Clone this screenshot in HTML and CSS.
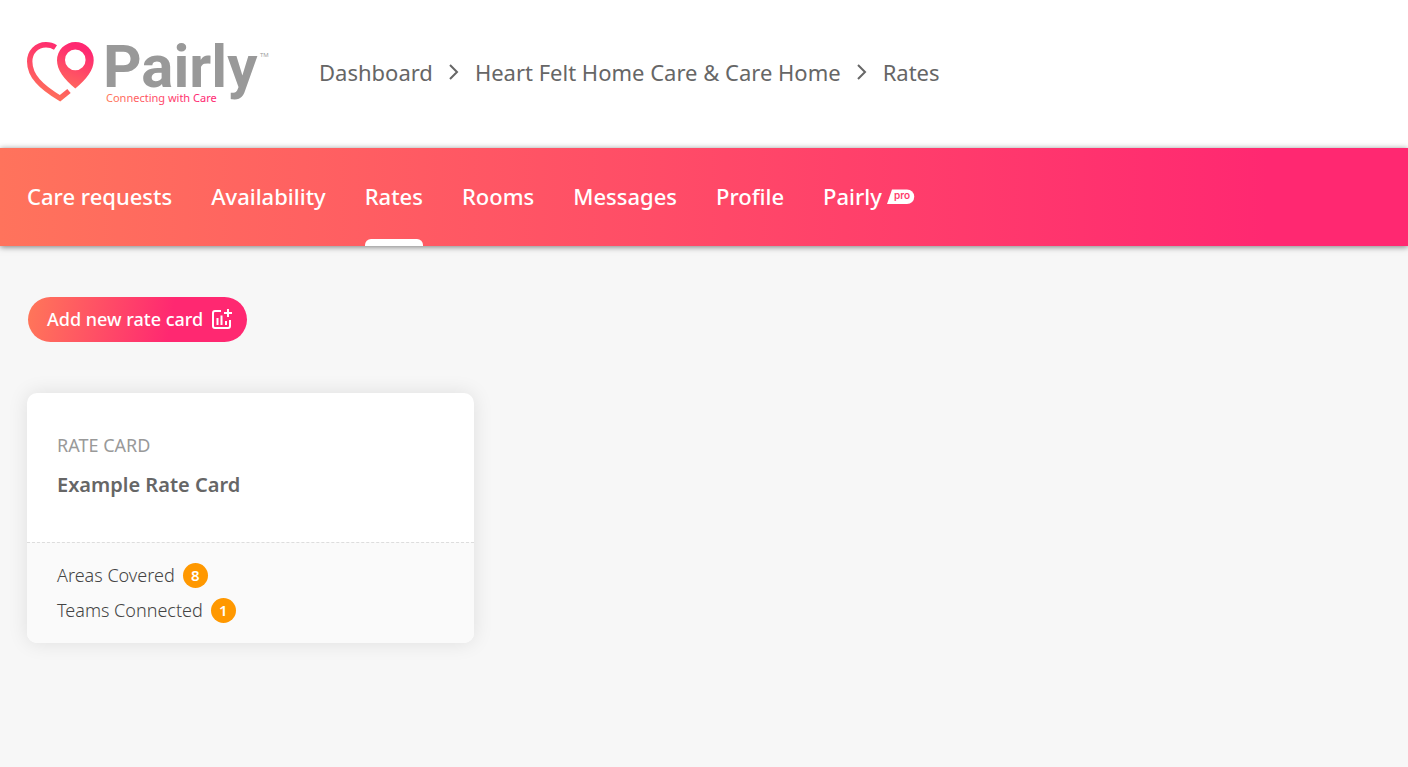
FILE: index.html
```html
<!DOCTYPE html>
<html lang="en">
  <head>
    <meta charset="utf-8" />
    <meta name="viewport" content="width=device-width, initial-scale=1" />
    <title>Rates - Pairly</title>
    <link rel="stylesheet" href="styles.css">
  </head>
  <body>
    <header class="header">
      <a class="logo" href="#" aria-label="Pairly home">
        <svg width="244" height="66" viewBox="0 0 244 66">
          <defs>
            <linearGradient id="heart" gradientUnits="userSpaceOnUse" x1="12" y1="50" x2="30" y2="0">
              <stop offset="0" stop-color="#ff6b5c" />
              <stop offset="1" stop-color="#ff2871" />
            </linearGradient>
            <linearGradient id="pin" gradientUnits="userSpaceOnUse" x1="38" y1="48" x2="54" y2="8">
              <stop offset="0" stop-color="#ff6b5c" />
              <stop offset="1" stop-color="#ff2871" />
            </linearGradient>
            <linearGradient id="tagline" gradientUnits="userSpaceOnUse" x1="79" y1="0" x2="194" y2="0">
              <stop offset="0" stop-color="#ff7759" />
              <stop offset="0.8" stop-color="#ff2871" />
            </linearGradient>
          </defs>
          <path d="M28.500 6.500C25.500 4.500 22.500 3.700 19 3.700C9.500 3.700 2.700 11 2.700 20.500C2.700 35 14 46 33 57.300L42 50" fill="none" stroke="url(#heart)" stroke-width="5.400" />
          <path fill="url(#pin)" fill-rule="evenodd" d="M48.300 1A18.300 18.300 0 0 0 30 19.300C30 29 37 38 48.300 47.500C59.600 38 66.700 29 66.700 19.300A18.300 18.300 0 0 0 48.300 1ZM48.300 8.600A10.300 10.300 0 1 1 48.300 29.200A10.300 10.300 0 1 1 48.300 8.600Z" />
          <text class="logo-name" x="76" y="46">Pairly</text>
          <text class="logo-tm" x="233" y="16">TM</text>
          <text class="logo-tagline" x="79" y="61" fill="url(#tagline)">Connecting with Care</text>
        </svg>
      </a>
      <nav class="breadcrumb" aria-label="Breadcrumb">
        <a href="#">Dashboard</a>
        <svg width="10" height="16" viewBox="0 0 10 16"><path d="M1 1l7 7-7 7" /></svg>
        <a href="#">Heart Felt Home Care &amp; Care Home</a>
        <svg width="10" height="16" viewBox="0 0 10 16"><path d="M1 1l7 7-7 7" /></svg>
        <a href="#">Rates</a>
      </nav>
    </header>

    <nav class="menu">
      <a href="#">Care requests</a>
      <a href="#">Availability</a>
      <a class="active" href="#">Rates</a>
      <a href="#">Rooms</a>
      <a href="#">Messages</a>
      <a href="#">Profile</a>
      <a class="menu-pro" href="#">
        Pairly
        <svg class="pro" width="28" height="16" viewBox="0 0 28 16">
          <path d="M5 1.500H20A7 7 0 0 1 20 16H0Z" fill="#fff" />
          <text x="7" y="11">pro</text>
        </svg>
      </a>
    </nav>

    <main class="content">
      <button class="add-button" type="button">
        Add new rate card
        <svg width="22" height="22" viewBox="0 0 22 22">
          <path d="M10 3H4Q2 3 2 5V18Q2 20 4 20H17Q19 20 19 18V12" />
          <path d="M17 1V9M13 5H21M6.500 10V17M10.500 7.500V17M15 13V17" />
        </svg>
      </button>

      <section class="card">
        <div class="card-top">
          <p class="card-type">RATE CARD</p>
          <h2>Example Rate Card</h2>
        </div>
        <div class="card-bottom">
          <p>Areas Covered <span class="badge">8</span></p>
          <p>Teams Connected <span class="badge">1</span></p>
        </div>
      </section>
    </main>
  </body>
</html>
```
FILE: styles.css
```css
* {
  box-sizing: border-box;
}
body {
  margin: 0;
  background-color: #f7f7f7;
  color: #666;
  font-family: "Noto Sans", "Open Sans", sans-serif;
}
a {
  color: inherit;
  text-decoration: none;
}
.header {
  display: flex;
  align-items: center;
  gap: 48px;
  min-height: 148px;
  padding: 0 27px;
  background-color: #fff;
}
.logo svg {
  display: block;
  overflow: visible;
}
.logo-name {
  font: 700 60px Roboto, sans-serif;
  fill: #999;
}
.logo-tm {
  font: 6px "Open Sans", sans-serif;
  fill: #999;
}
.logo-tagline {
  font: 11px "Noto Sans", sans-serif;
}
.breadcrumb {
  display: flex;
  align-items: center;
  gap: 16px;
  padding-bottom: 4px;
  font-size: 22px;
  line-height: 32px;
}
.breadcrumb svg {
  fill: none;
  stroke: #666;
  stroke-width: 2;
}
.menu {
  position: relative;
  display: flex;
  gap: 39px;
  padding: 0 27px;
  background: linear-gradient(90deg, #ff735c, #ff2871 90%);
  box-shadow: 0 1px 6px rgba(0, 0, 0, 0.5);
  color: #fff;
  font-size: 22px;
  font-weight: 500;
  line-height: 96px;
}
.menu a {
  position: relative;
  padding-bottom: 2px;
}
.menu .active::after {
  content: "";
  position: absolute;
  right: 0;
  bottom: 0;
  left: 0;
  height: 7px;
  border-radius: 6px 6px 0 0;
  background-color: #fff;
}
.menu-pro {
  display: flex;
  align-items: center;
  gap: 5px;
}
.pro text {
  font: 600 10px Inter, sans-serif;
  fill: #ff3d6b;
}
.content {
  padding: 51px 27px;
}
.add-button {
  display: flex;
  align-items: center;
  gap: 8px;
  height: 45px;
  margin-left: 1px;
  padding: 0 14px 2px 19px;
  border: none;
  border-radius: 23px;
  background: linear-gradient(100deg, #ff7759, #ff2871 65%);
  color: #fff;
  font-family: inherit;
  font-size: 18px;
  font-weight: 500;
  cursor: pointer;
}
.add-button svg {
  fill: none;
  stroke: #fff;
  stroke-width: 2;
}
.card {
  max-width: 447px;
  margin-top: 51px;
  border-radius: 10px;
  background-color: #fff;
  box-shadow: 0 0 20px rgba(0, 0, 0, 0.1);
  overflow: hidden;
}
.card-top {
  padding: 39px 30px 41px;
}
.card-type {
  margin: 0;
  color: #999;
  font-size: 18px;
  line-height: 26px;
}
.card h2 {
  margin: 11px 0 0;
  font-size: 20px;
  font-weight: 600;
  line-height: 32px;
}
.card-bottom {
  padding: 15px 30px;
  border-top: 1px dashed #ddd;
  background-color: #fafafa;
}
.card-bottom p {
  display: flex;
  align-items: center;
  gap: 8px;
  margin: 0;
  color: #444;
  font-size: 18px;
  font-weight: 300;
  line-height: 35px;
}
.badge {
  width: 25px;
  border-radius: 50%;
  background-color: #ff9800;
  color: #fff;
  font-size: 15px;
  font-weight: 600;
  line-height: 25px;
  text-align: center;
}
```
